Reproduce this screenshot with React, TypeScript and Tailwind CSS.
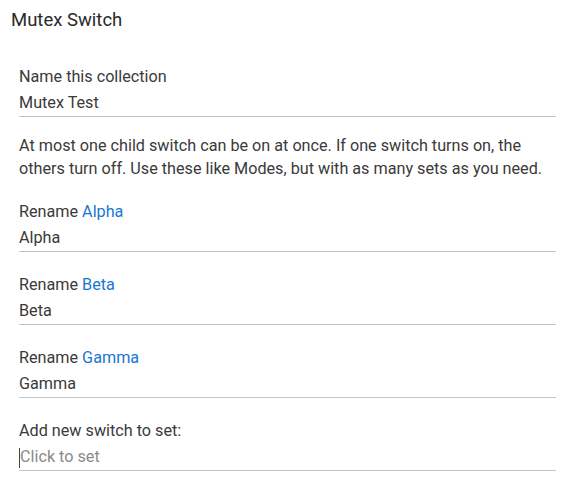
const FIELDS = [
  { label: 'Rename ', device: 'Alpha', value: 'Alpha' },
  { label: 'Rename ', device: 'Beta', value: 'Beta' },
  { label: 'Rename ', device: 'Gamma', value: 'Gamma' },
]

function Field({ children, value, placeholder }: { children: React.ReactNode; value?: string; placeholder?: string }) {
  return (
    <div className="flex flex-col">
      <div className="h-6 leading-6">{children}</div>
      <div className="h-[28px] pt-[2px] leading-6 border-b border-[#c4c4c4] flex items-start">
        {placeholder ? (
          <span className="flex items-center text-[#8a8a8a]">
            <span className="w-px h-[20px] bg-[#444] mt-[2px]" />
            {placeholder}
          </span>
        ) : (
          value
        )}
      </div>
    </div>
  )
}

export default function App() {
  return (
    <div className="w-[573px] h-[500px] bg-white text-[#3a3a3a] text-[16.2px]" style={{ fontFamily: 'Roboto, "Liberation Sans", sans-serif' }}>
      <div className="pt-[8px] pl-[11px] text-[18.5px] leading-6 text-[#2a2a2a]">Mutex Switch</div>

      <div className="mt-[33px] ml-[19px] w-[537px] flex flex-col">
        <Field value="Mutex Test">Name this collection</Field>

        <p className="mt-[17px] mb-[20px] leading-[23px]">
          At most one child switch can be on at once. If one switch turns on, the others turn off. Use these like Modes, but with as many sets as you need.
        </p>

        <div className="flex flex-col gap-[21px]">
          {FIELDS.map((f) => (
            <Field key={f.device} value={f.value}>
              {f.label}
              <span className="text-[#1976d2]">{f.device}</span>
            </Field>
          ))}
          <Field placeholder="Click to set">Add new switch to set:</Field>
        </div>
      </div>
    </div>
  )
}
